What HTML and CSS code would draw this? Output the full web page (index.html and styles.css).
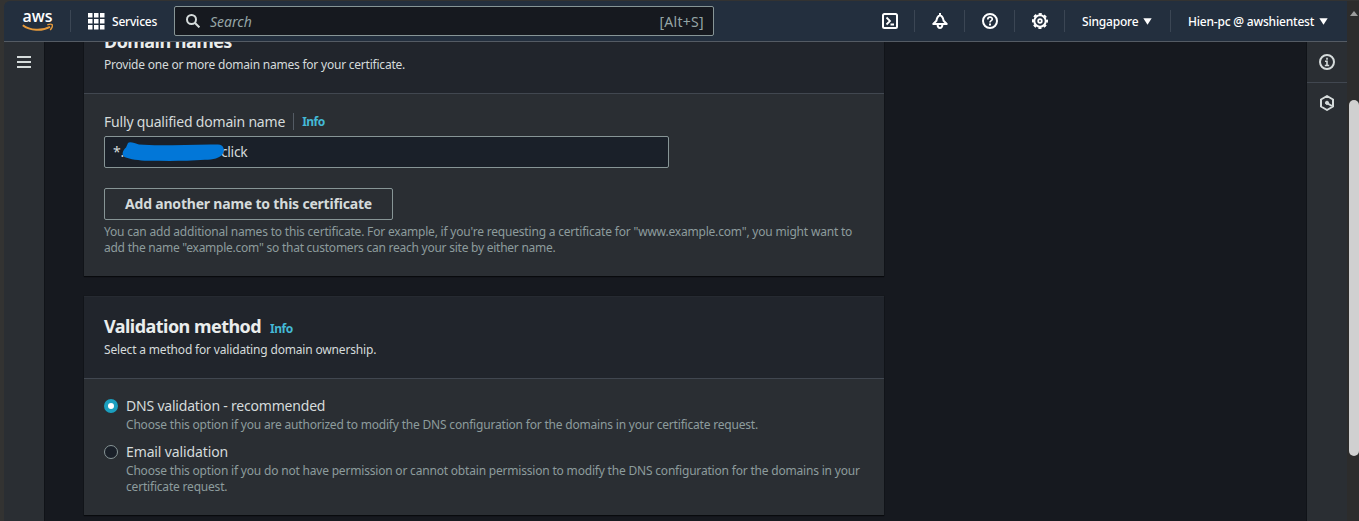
FILE: index.html
```html
<!DOCTYPE html>
<html lang="en">
<head>
<meta charset="utf-8">
<title>Request public certificate</title>
<link rel="stylesheet" href="styles.css">
</head>
<body>
<div class="window">
  <div class="app">
    <header class="topnav">
      <svg class="logo" width="32" height="22" viewBox="0 0 32 22">
        <text class="logo-word" x="0.5" y="12" textLength="30" lengthAdjust="spacingAndGlyphs">aws</text>
        <path d="M.8 15.2C8 20.7 20 21.2 28 16.8" fill="none" stroke="#e69a3b" stroke-width="2"/>
        <path d="M25.3 14.9c2-.9 4.200-.9 5-.1.3 1.500-.6 3.800-2.200 5.200" fill="none" stroke="#e69a3b" stroke-width="1.300"/>
      </svg>
      <i class="sep sep-logo"></i>
      <button class="services">
        <svg width="17" height="17" viewBox="0 0 17 17" fill="#fff"><path d="M0 0h4.500v4.500H0zM6 0h4.500v4.500H6zM12 0h4.500v4.500H12zM0 6h4.500v4.500H0zM6 6h4.500v4.500H6zM12 6h4.500v4.500H12zM0 12h4.500v4.500H0zM6 12h4.500v4.500H6zM12 12h4.500v4.500H12z"/></svg>
        <span>Services</span>
      </button>
      <div class="search">
        <svg width="14" height="14" viewBox="0 0 14 14" fill="none" stroke="#d5dbdb" stroke-width="2"><circle cx="5.500" cy="5.500" r="4.500"/><path d="M8.800 8.800l4.600 4.600"/></svg>
        <span class="search-hint">Search</span>
        <span class="search-key">[Alt+S]</span>
      </div>
      <nav class="tools">
        <button class="tool"><svg width="16" height="16" viewBox="0 0 16 16" fill="none" stroke="#fff" stroke-width="2"><rect x="1" y="1" width="14" height="14" rx="1.500"/><path d="M4.500 4.500L8 8l-3.500 3.500M8.500 11.500H12" stroke-width="1.800"/></svg></button>
        <i class="sep"></i>
        <button class="tool tool-bell"><svg width="16" height="16" viewBox="0 0 16 16" fill="none" stroke="#fff" stroke-width="2" stroke-linejoin="round"><path d="M8 0v2.500M1.300 11h13.400L11.600 7.700C11 4.500 10 2.700 8 2.200 6 2.700 5 4.500 4.400 7.700z"/><path d="M5.600 11.500c0 4.600 4.800 4.600 4.800 0"/></svg></button>
        <i class="sep"></i>
        <button class="tool"><svg width="16" height="16" viewBox="0 0 16 16" fill="none" stroke="#fff" stroke-width="2"><circle cx="8" cy="8" r="7"/><path d="M5.800 6.400C5.800 3.400 10.300 3.500 10.300 6.200 10.300 7.700 8 7.700 8 9.500" stroke-width="1.700"/><path d="M8 10.600v1.900"/></svg></button>
        <i class="sep"></i>
        <button class="tool"><svg width="16" height="16" viewBox="0 0 16 16" fill="none" stroke="#fff" stroke-linejoin="round"><circle cx="8" cy="8" r="5.700" stroke-width="2"/><circle cx="8" cy="8" r="7" stroke-width="2" stroke-dasharray="3.100 2.398" stroke-dashoffset="1.550"/><circle cx="8" cy="8" r="1.800" stroke-width="1.800"/></svg></button>
        <i class="sep"></i>
        <button class="menu region"><span>Singapore</span><svg width="9" height="7" viewBox="0 0 9 7"><path d="M.3.300h8.400L4.500 6.700z" fill="#fff"/></svg></button>
        <i class="sep"></i>
        <button class="menu account"><span>Hien-pc @ awshientest</span><svg width="9" height="7" viewBox="0 0 9 7"><path d="M.3.300h8.400L4.500 6.700z" fill="#fff"/></svg></button>
      </nav>
    </header>
    <div class="body">
      <aside class="rail rail-left">
        <svg width="14" height="12" viewBox="0 0 14 12" stroke="#d5dbdb" stroke-width="2"><path d="M0 1h14M0 6h14M0 11h14"/></svg>
      </aside>
      <main class="content">
        <section class="card card-first">
          <div class="card-head">
            <h2><span class="t-title">Domain names</span></h2>
            <p><span class="t-provide">Provide one or more domain names for your certificate.</span></p>
          </div>
          <div class="card-body form">
            <div class="label-row"><label class="t-label">Fully qualified domain name</label><a class="info info-field">Info</a></div>
            <div class="input">
              <span>*.</span><span class="tld">click</span>
              <svg class="scribble" width="105" height="22" viewBox="0 0 105 22"><path d="M7 2C9 .2 14 2.500 18 3.500 40 5.500 70 3 97 3.500c6 0 7 6 5 9-3 5-10 6-18 6.300-20 1.500-40 1-57 1C18 19.500 9 18.500 3.500 16 0 14 2 9 5 6.500z" fill="#0277d8"/></svg>
            </div>
            <button class="add">Add another name to this certificate</button>
            <p class="hint"><span>You can add additional names to this certificate. For example, if you're requesting a certificate for "www.example.com", you might want to</span><br><span class="t-hint2">add the name "example.com" so that customers can reach your site by either name.</span></p>
          </div>
        </section>
        <section class="card">
          <div class="card-head">
            <h2><span class="t-title">Validation method</span><a class="info">Info</a></h2>
            <p><span class="t-select">Select a method for validating domain ownership.</span></p>
          </div>
          <div class="card-body options">
            <div class="option">
              <i class="radio radio-on"></i>
              <div><div class="option-name">DNS validation - recommended</div><p class="hint">Choose this option if you are authorized to modify the DNS configuration for the domains in your certificate request.</p></div>
            </div>
            <div class="option">
              <i class="radio"></i>
              <div><div class="option-name t-email">Email validation</div><p class="hint">Choose this option if you do not have permission or cannot obtain permission to modify the DNS configuration for the domains in your<br>certificate request.</p></div>
            </div>
          </div>
        </section>
      </main>
      <aside class="rail rail-right">
        <div class="rail-cell"><svg width="16" height="16" viewBox="0 0 16 16" fill="none" stroke="#d5dbdb" stroke-width="2"><circle cx="8" cy="8" r="7"/><path d="M8 3.700v2M6 7.300h2v4M5.800 11.500h4.400" stroke-width="1.600"/></svg></div>
        <div class="rail-cell"><svg width="16" height="16" viewBox="0 0 16 16" fill="none" stroke="#d5dbdb" stroke-width="2" stroke-linejoin="round"><path d="M8 1l6 3.500v7L8 15l-6-3.500v-7z"/><path d="M13 11L8 8.200"/><circle cx="8" cy="7.800" r="1.600" fill="#d5dbdb" stroke-width="1"/></svg></div>
      </aside>
    </div>
  </div>
  <div class="scrollbar">
    <svg width="8" height="5" viewBox="0 0 8 5"><path d="M4 0l4 5H0z" fill="#9c9c9c"/></svg>
    <div class="thumb"></div>
  </div>
</div>
</body>
</html>
```
FILE: styles.css
```css
* { box-sizing: border-box; }
body { margin: 0; background: #333332; font-family: "Noto Sans", sans-serif; font-size: 12px; color: #d5dbdb; overflow: hidden; }
h2, p { margin: 0; }
button { font: inherit; color: inherit; background: none; border: 0; padding: 0; margin: 0; display: flex; align-items: center; }
svg { display: block; flex: none; }
.window { display: flex; width: 1359px; height: 521px; padding: 1px 0 0 4px; }
.app { display: flex; flex-direction: column; width: 1343px; height: 520px; border-radius: 6px 0 0 0; overflow: hidden; }
.topnav { display: flex; align-items: center; flex: none; height: 41px; background: #232f3e; border-bottom: 1px solid #545b64; color: #fff; white-space: nowrap; }
.logo { margin-left: 18px; overflow: visible; }
.logo-word { font-family: "Open Sans", sans-serif; font-size: 17px; font-weight: 600; fill: #fff; }
.sep { width: 1px; height: 22px; background: #3b4654; flex: none; }
.sep-logo { margin-left: 16px; }
.services { margin-left: 17px; gap: 7px; width: 86px; font-weight: 500; letter-spacing: -0.2px; }
.search { display: flex; align-items: center; width: 540px; height: 30px; border: 1px solid #879596; border-radius: 2px; background: #16191f; padding: 0 9px 0 11px; }
.search-hint { margin-left: 10px; font-style: italic; color: #95a5a6; font-size: 14px; }
.search-key { margin-left: auto; color: #95a5a6; font-size: 14px; letter-spacing: 0.3px; }
.tools { display: flex; align-items: center; margin-left: auto; padding-right: 19px; }
.tool { width: 49px; justify-content: center; }
.menu { font-weight: 500; justify-content: space-between; letter-spacing: -0.2px; }
.region { padding: 0 18px 0 17px; width: 105px; }
.account { padding-left: 17px; width: 157px; }
.body { display: flex; flex: 1; min-height: 0; }
.rail { flex: none; background: #2a2e33; display: flex; flex-direction: column; }
.rail-left { width: 41px; border-right: 1px solid #101318; padding: 14px 0 0 13px; }
.rail-right { width: 41px; border-left: 1px solid #101318; }
.rail-cell { height: 41px; display: flex; align-items: center; justify-content: center; border-bottom: 1px solid #414750; }
.rail-cell:last-child { border-bottom: 0; height: 40px; }
.content { flex: 1; background: #16191f; padding-left: 39px; overflow: hidden; }
.card { width: 800px; margin-bottom: 20px; background: #2a2e33; box-shadow: 0 1px 1px #080a0d, 0 0 0 1px #14171c; }
.card-first { margin-top: -31px; }
.card-head { height: 83px; padding: 18px 20px 0; background: #21252c; border-bottom: 1px solid #414750; border-top: 1px solid #262a31; }
.card-head h2 { display: flex; align-items: baseline; height: 27px; font-size: 18px; line-height: 22px; font-weight: 700; color: #eaeded; white-space: nowrap; }
.card-head h2 .info { margin-left: 9px; }
.card-head p { line-height: 16px; }
.info { color: #44b9d6; font-size: 12px; font-weight: 700; line-height: 16px; letter-spacing: -0.5px; }
.card-body { padding: 16px 20px 20px; white-space: nowrap; }
.label-row { display: flex; align-items: center; height: 22px; font-size: 14px; }
.info-field { margin-left: 8px; padding: 1px 0 0 8px; border-left: 1px solid #545b64; }
.input { position: relative; display: flex; align-items: center; width: 565px; height: 32px; margin-top: 4px; border: 1px solid #879596; border-radius: 2px; background: #1a2029; padding: 0 0 1px 8px; font-size: 14px; letter-spacing: -0.3px; }
.tld { margin-left: 97px; }
.scribble { position: absolute; left: 16px; top: 4px; }
.add { width: 289px; height: 32px; margin-top: 20px; margin-bottom: 4px; padding-bottom: 2px; justify-content: center; border: 1px solid #879596; border-radius: 2px; font-size: 14px; font-weight: 700; letter-spacing: -0.2px; }
.hint { line-height: 16px; color: #8d9c9d; font-size: 12px; letter-spacing: -0.193px; }
.option { display: flex; gap: 8px; }
.option + .option { margin-top: 8px; }
.option-name { font-size: 14px; line-height: 22px; letter-spacing: -0.2px; }
.t-title { letter-spacing: -0.54px; }
.t-provide { letter-spacing: -0.22px; }
.t-label { letter-spacing: -0.19px; }
.t-hint2 { letter-spacing: -0.245px; }
.t-select { letter-spacing: -0.17px; }
.t-email { letter-spacing: -0.12px; }
.radio { width: 14px; height: 14px; margin-top: 4px; border: 1px solid #879596; border-radius: 50%; background: #1a2029; flex: none; }
.radio-on { border: 4px solid #1b9fbf; background: #fff; }
.scrollbar { flex: 1; background: #2c2c2c; display: flex; flex-direction: column; align-items: center; padding: 10px 0 0 2px; }
.thumb { width: 10px; height: 356px; margin-top: 84px; border-radius: 5px; background: #d0d0d0; }
```
